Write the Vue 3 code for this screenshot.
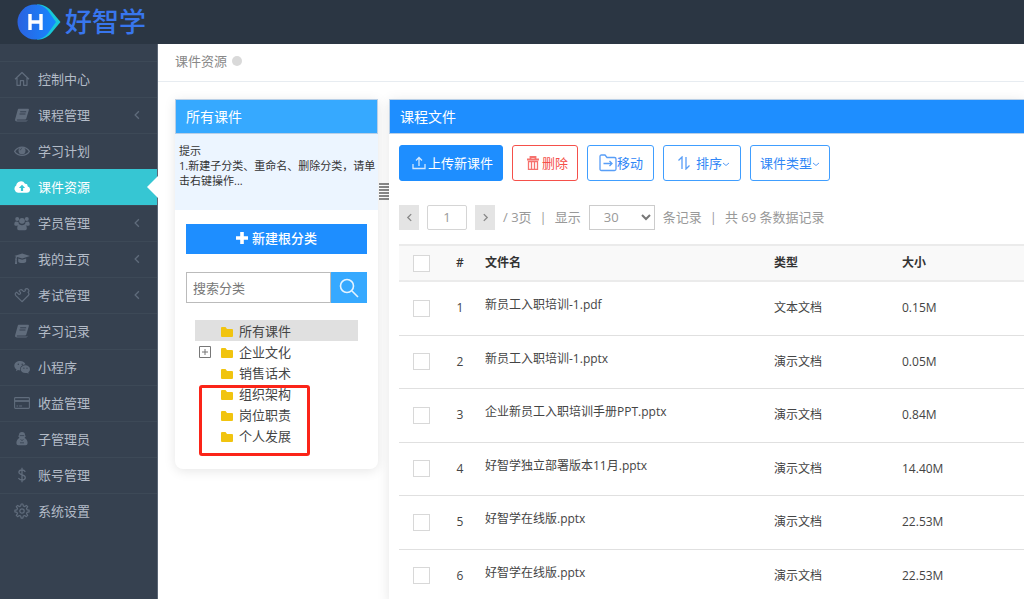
<script setup>
import { ref } from 'vue'

const icons = {
  home: '<path d="M1 8.2 8 1.5l7 6.7M3 7v7.3h3.4V9.6h3.2v4.7H13V7" fill="none" stroke="currentColor" stroke-width="1.2" stroke-linejoin="round"/>',
  book: '<path d="M5 1.800h9c.7 0 1.100.6.9 1.200l-2.600 8.500c-.2.800-.8 1.100-1.500 1.100H3.200c-.6 0-.8.8 0 .9h8.900c1 0 1.500-.4 1.800-1.200L15.600 6l-2 7.200c-.3.800-.9 1.200-1.700 1.200H3C1.300 14.400.7 13.200 1.200 11.900L3.700 3.100c.2-.9.600-1.300 1.300-1.300z" fill="currentColor"/><path d="M6.200 4.800h6M5.500 7h6" stroke="#364150" stroke-width="1"/>',
  eye: '<path d="M0.600 8.300C4.300 2.600 11.700 2.600 15.400 8.300 11.700 13.700 4.300 13.700.600 8.300z" fill="none" stroke="currentColor" stroke-width="1.300"/><circle cx="8" cy="7.700" r="3.500" fill="currentColor"/><path d="M6.100 7.300c.1-1 .8-1.600 1.800-1.700" fill="none" stroke="#364150" stroke-width=".8"/>',
  cloud: '<path fill-rule="evenodd" fill="currentColor" d="M4 13.700A3.900 3.900 0 0 1 2.200 6.600 4.700 4.700 0 0 1 11 4.800a2.600 2.600 0 0 1 2.700 2.800 3.100 3.100 0 0 1-.8 6.100zM8 5.800 4.900 9h2v3h2.200V9h2z"/>',
  users: '<g fill="currentColor"><circle cx="3.200" cy="4" r="2"/><circle cx="12.800" cy="4" r="2"/><circle cx="8" cy="5.800" r="2.900"/><path d="M.3 9.500C.3 7.500 1 6.500 2 6.500l2.500.4c0 1.200.4 2 1 2.600-1 .1-1.700.6-2.200 1.200H1.500c-.7 0-1.200-.4-1.200-1.200zM15.700 9.500c0-2-.7-3-1.700-3l-2.500.4c0 1.200-.4 2-1 2.600 1 .1 1.700.6 2.200 1.200h1.800c.7 0 1.200-.4 1.200-1.200zM3.200 13.300c0-2.400.9-3.900 2.500-3.900 1.400 1 3.200 1 4.600 0 1.600 0 2.500 1.500 2.500 3.900 0 1.300-.6 1.900-1.700 1.900H4.900c-1.100 0-1.700-.6-1.700-1.900z"/></g>',
  cap: '<path fill="currentColor" d="M8.200 2.500 16 5l-7.800 2.600-4.900-1.700c-.5.400-.7 1-.7 1.600.6.400.6 1 .1 1.400l.4 4H.9l.5-4c-.5-.4-.4-1 .1-1.400 0-.8.2-1.500.5-2L.2 5zM4.200 7.400l4 1.400 4-1.400v3.100c-.5 2-7.500 2-8 0z"/>',
  puzzle: '<g fill="none" stroke="currentColor" stroke-width="1.200" stroke-linejoin="round"><path d="M8 14.700 1.600 8.300C.9 7 1.300 5.800 2.600 5.200l2 2C5.900 7.700 7 6.500 6.400 5.400L5 4c.9-1.500 2.400-1.600 3.400-.7l1 1c1.500.4 2.400-.7 1.700-1.900 1-1.100 2.300-1.100 3.200-.1 1 1.100.7 2.400-.2 3 .9 1 1 2.400.2 3.200z"/></g>',
  wechat: '<g fill="currentColor"><path d="M6.200 2C2.900 2 .3 4.100.3 6.700c0 1.500.8 2.800 2.200 3.700l-.6 1.800 2.100-1.100c.8.200 1.500.3 2.300.3C5.500 7.900 8 5.500 11.500 5.500 11 3.500 8.800 2 6.200 2z"/><path d="M16 10.200c0-2.200-2.100-3.900-4.600-3.900s-4.700 1.700-4.700 3.900 2.100 3.900 4.700 3.900c.6 0 1.200-.1 1.700-.2l1.600.9-.4-1.500c1-.8 1.700-1.900 1.700-3.100z"/></g><g fill="#364150"><circle cx="4.300" cy="5.300" r=".7"/><circle cx="8.200" cy="5.300" r=".7"/><circle cx="9.900" cy="9.200" r=".6"/><circle cx="13" cy="9.200" r=".6"/></g>',
  card: '<rect x=".6" y="2.600" width="14.800" height="10.800" rx=".8" fill="none" stroke="currentColor" stroke-width="1.100"/><path d="M1 6h14" stroke="currentColor" stroke-width="1.800"/><path d="M2.500 11h1.600m1 0h3" stroke="currentColor"/>',
  admin: '<path fill="currentColor" d="M5 4.300C5 2 6 1 8 1s3 1 3 3.300l.8.700c-.1.600-.5 1-.9 1.200l-.3.900c1.800 1 3 2.700 3 4.600 0 1.700-.7 2.500-2.100 2.500h-7c-1.400 0-2.100-.8-2.100-2.500 0-1.900 1.200-3.600 3-4.600l-.3-.9c-.4-.2-.8-.6-.9-1.200z"/><path d="m6.500 8.500 1.500 1 1.500-1M6 11.800h4M5.800 4.600h4.400" fill="none" stroke="#364150" stroke-width=".8"/>',
  dollar: '<path d="M11.300 4.800C10.600 3.600 9.500 3 8 3 6.200 3 4.900 3.900 4.900 5.300c0 3.300 6.400 1.800 6.400 5.200 0 1.500-1.400 2.500-3.300 2.500-1.600 0-2.900-.7-3.600-2M8 .8v14.400" fill="none" stroke="currentColor" stroke-width="1.300"/>',
  gear: '<g fill="none" stroke="currentColor" stroke-width="1.200" stroke-linejoin="round"><path d="m6.700 3 .4-2h1.800l.4 2 1.400.6 1.700-1.200 1.300 1.300-1.200 1.700.6 1.400 2 .4v1.700l-2 .4-.6 1.400 1.200 1.700-1.300 1.300-1.700-1.200-1.400.6-.4 2H7.100l-.4-2-1.400-.6-1.700 1.200-1.300-1.300 1.200-1.700-.6-1.400-2-.4V7.200l2-.4.6-1.400-1.200-1.700 1.300-1.300 1.700 1.200z"/><circle cx="8" cy="8" r="2.200"/></g>'
}

const menu = [
  { label: '控制中心', icon: 'home' },
  { label: '课程管理', icon: 'book', more: true },
  { label: '学习计划', icon: 'eye' },
  { label: '课件资源', icon: 'cloud', active: true },
  { label: '学员管理', icon: 'users', more: true },
  { label: '我的主页', icon: 'cap', more: true },
  { label: '考试管理', icon: 'puzzle', more: true },
  { label: '学习记录', icon: 'book' },
  { label: '小程序', icon: 'wechat' },
  { label: '收益管理', icon: 'card' },
  { label: '子管理员', icon: 'admin' },
  { label: '账号管理', icon: 'dollar' },
  { label: '系统设置', icon: 'gear' }
]

const folders = [
  { name: '所有课件', current: true },
  { name: '企业文化', expandable: true },
  { name: '销售话术' }
]
const markedFolders = ['组织架构', '岗位职责', '个人发展']

const files = [
  { name: '新员工入职培训-1.pdf', type: '文本文档', size: '0.15M' },
  { name: '新员工入职培训-1.pptx', type: '演示文档', size: '0.05M' },
  { name: '企业新员工入职培训手册PPT.pptx', type: '演示文档', size: '0.84M' },
  { name: '好智学独立部署版本11月.pptx', type: '演示文档', size: '14.40M' },
  { name: '好智学在线版.pptx', type: '演示文档', size: '22.53M' },
  { name: '好智学在线版.pptx', type: '演示文档', size: '22.53M' }
]

const page = ref('1')
const pageSize = ref('30')
const keyword = ref('')
</script>

<template>
  <div class="app">
    <header class="topbar">
      <a class="brand" href="#">
        <svg class="logo" viewBox="0 0 44 36" aria-hidden="true">
          <defs>
            <linearGradient id="drop" x1="0" x2="1" y1="0" y2="0">
              <stop offset="0" stop-color="#2b62e0" />
              <stop offset="1" stop-color="#1688ff" />
            </linearGradient>
          </defs>
          <path d="M20 .5c6 0 10 2 13.500 5.500L43.500 18 33.500 30C30 33.500 26 35.500 20 35.500z" fill="#18c8d8" />
          <path d="M18 .5c5.500 0 9.500 2 12.500 5.500L39 18 30.500 30c-3 3.500-7 5.500-12.500 5.500a17.500 17.500 0 0 1 0-35z" fill="url(#drop)" />
          <path d="M13 10v16M24 10v16M13 18h11" stroke="#fff" stroke-width="3.400" fill="none" />
        </svg>
        <span class="brand-name">好智学</span>
      </a>
    </header>

    <div class="body">
      <nav class="sidebar">
        <a v-for="m in menu" :key="m.label" href="#" class="nav-item" :class="{ active: m.active }">
          <svg class="nav-icon" viewBox="0 0 16 16" aria-hidden="true" v-html="icons[m.icon]"></svg>
          <span>{{ m.label }}</span>
          <svg v-if="m.more" class="nav-more" viewBox="0 0 6 8" aria-hidden="true"><path d="M4.500 1 1.500 4l3 3" /></svg>
        </a>
      </nav>

      <main class="main">
        <div class="crumbs">
          <a href="#">课件资源</a>
          <i class="dot"></i>
        </div>

        <div class="content">
          <section class="tree-panel">
            <h2 class="panel-title light">所有课件</h2>
            <div class="hint">
              <p>提示</p>
              <p>1.新建子分类、重命名、删除分类，请单击右键操作...</p>
            </div>
            <div class="tree-body">
              <button type="button" class="add-root">
                <svg viewBox="0 0 12 12" aria-hidden="true"><path d="M6 0v12M0 6h12" stroke="currentColor" stroke-width="3.600" /></svg>
                新建根分类
              </button>
              <form class="search" @submit.prevent>
                <input v-model="keyword" type="text" placeholder="搜索分类" aria-label="搜索分类" />
                <button type="submit" aria-label="搜索">
                  <svg viewBox="0 0 20 20" aria-hidden="true"><circle cx="8" cy="8" r="6.500" /><path d="m13 13 6 6" /></svg>
                </button>
              </form>
              <div class="tree">
                <a v-for="f in folders" :key="f.name" href="#" class="node" :class="{ current: f.current }">
                  <span class="toggle">
                    <svg v-if="f.expandable" viewBox="0 0 12 12" aria-hidden="true"><path d="M.5.5h11v11H.5zM3 6h6M6 3v6" /></svg>
                  </span>
                  <svg class="folder" viewBox="0 0 12 10" aria-hidden="true"><path d="M1 0h3.500L6 2h5q1 0 1 1v6q0 1-1 1H1q-1 0-1-1V1q0-1 1-1z" /></svg>
                  {{ f.name }}
                </a>
                <div class="marked">
                  <a v-for="name in markedFolders" :key="name" href="#" class="node">
                    <span class="toggle"></span>
                    <svg class="folder" viewBox="0 0 12 10" aria-hidden="true"><path d="M1 0h3.500L6 2h5q1 0 1 1v6q0 1-1 1H1q-1 0-1-1V1q0-1 1-1z" /></svg>
                    {{ name }}
                  </a>
                </div>
              </div>
            </div>
          </section>

          <div class="splitter"><span class="grip"></span></div>

          <section class="file-panel">
            <h2 class="panel-title">课程文件</h2>
            <div class="file-body">
              <div class="toolbar">
                <button type="button" class="btn primary">
                  <svg class="i14" viewBox="0 0 14 14" aria-hidden="true"><path d="M1 8v4.500h12V8M7 10V2M4 4.500l3-3 3 3" /></svg>
                  上传新课件
                </button>
                <button type="button" class="btn danger">
                  <svg class="i14" viewBox="0 0 14 14" aria-hidden="true"><path d="M1 3.500h12M4.500 3V1h5v2" stroke-width="1.800" /><path d="M2.500 5.500h9v7.800h-9zM5.500 6v7M8.500 6v7" /></svg>
                  删除
                </button>
                <button type="button" class="btn tight">
                  <svg class="i18" viewBox="0 0 18 18" aria-hidden="true"><path d="M1 2.500q0-1.500 1.500-1.500H6l2 2.500h7.500Q17 3.500 17 5v10q0 1.500-1.500 1.500h-13Q1 16.500 1 15zM4.500 9.500H13M10.500 7l2.500 2.500L10.500 12" /></svg>
                  移动
                </button>
                <button type="button" class="btn sort">
                  <svg class="i14" viewBox="0 0 14 14" aria-hidden="true"><path d="M1.500 4.500 5 1v12M9 1v12l3.500-3.500" /></svg>
                  <span>排序<svg class="caret" viewBox="0 0 8 5" aria-hidden="true"><path d="m1 1 3 2.500L7 1" /></svg></span>
                </button>
                <button type="button" class="btn">
                  <span>课件类型<svg class="caret" viewBox="0 0 8 5" aria-hidden="true"><path d="m1 1 3 2.500L7 1" /></svg></span>
                </button>
              </div>

              <div class="pager">
                <button type="button" class="step" aria-label="上一页"><svg viewBox="0 0 6 8" aria-hidden="true"><path d="M4.500 1 1.500 4l3 3" /></svg></button>
                <input v-model="page" type="text" aria-label="页码" />
                <button type="button" class="step" aria-label="下一页"><svg viewBox="0 0 6 8" aria-hidden="true"><path d="m1.500 1 3 3-3 3" /></svg></button>
                <span>/ 3页</span>
                <span>|</span>
                <label for="page-size">显示</label>
                <span class="select">
                  <select id="page-size" v-model="pageSize">
                    <option>30</option>
                    <option>50</option>
                  </select>
                  <svg viewBox="0 0 10 7" aria-hidden="true"><path d="m1 1 4 4 4-4" /></svg>
                </span>
                <span>条记录</span>
                <span>|</span>
                <span>共 69 条数据记录</span>
              </div>

              <table>
                <colgroup>
                  <col class="c-check" />
                  <col class="c-num" />
                  <col />
                  <col class="c-type" />
                  <col class="c-size" />
                </colgroup>
                <thead>
                  <tr>
                    <th class="check"><input type="checkbox" aria-label="全选" /></th>
                    <th class="num">#</th>
                    <th>文件名</th>
                    <th>类型</th>
                    <th>大小</th>
                  </tr>
                </thead>
                <tbody>
                  <tr v-for="(f, i) in files" :key="i">
                    <td class="check"><input type="checkbox" :aria-label="'选择 ' + f.name" /></td>
                    <td class="num">{{ i + 1 }}</td>
                    <td class="name">{{ f.name }}</td>
                    <td>{{ f.type }}</td>
                    <td>{{ f.size }}</td>
                  </tr>
                </tbody>
              </table>
            </div>
          </section>
        </div>
      </main>
    </div>
  </div>
</template>

<style>
body {
  margin: 0;
  overflow: hidden;
}
</style>

<style scoped>
.app {
  display: flex;
  flex-direction: column;
  height: 100vh;
  overflow: hidden;
  font: 13px/20px "Open Sans", "Noto Sans CJK SC", sans-serif;
  color: #444;
  background: #fff;
}
.app *,
.app *::after {
  box-sizing: border-box;
}
button,
input,
select {
  font: inherit;
  margin: 0;
}
button {
  cursor: pointer;
}
a {
  color: inherit;
  text-decoration: none;
}
svg {
  flex: none;
}
.topbar {
  flex: none;
  height: 44px;
  background: #2b3643;
}
.brand {
  display: inline-flex;
  align-items: center;
  gap: 4px;
  height: 44px;
  padding-left: 17px;
}
.logo {
  width: 44px;
  height: 36px;
}
.brand-name {
  font-size: 27px;
  font-weight: 500;
  line-height: 44px;
  color: #3876ee;
}
.body {
  flex: 1;
  display: flex;
  min-height: 0;
}
.sidebar {
  flex: none;
  width: 158px;
  padding-top: 17px;
  background: #364150;
  border-right: 1px solid #5b6675;
}
.nav-item {
  position: relative;
  display: flex;
  align-items: center;
  gap: 8px;
  height: 36px;
  padding: 0 16px 2px 14px;
  border-top: 1px solid #3d4957;
  color: #b4bcc8;
}
.nav-icon {
  width: 16px;
  height: 16px;
  color: #606c7c;
}
.nav-more {
  width: 8px;
  height: 10px;
  margin-left: auto;
  fill: none;
  stroke: #606c7c;
}
.nav-item.active {
  background: #36c6d3;
  border-color: #36c6d3;
  color: #fff;
}
.nav-item.active .nav-icon {
  color: #fff;
}
.nav-item.active::after {
  content: "";
  position: absolute;
  top: 6px;
  right: -1px;
  border: 11px solid transparent;
  border-right-color: #fff;
  border-left-width: 0;
}
.main {
  flex: 1;
  min-width: 0;
}
.crumbs {
  display: flex;
  align-items: center;
  gap: 5px;
  height: 38px;
  padding: 0 0 4px 17px;
  border-bottom: 1px solid #e7ecf1;
  color: #888;
}
.dot {
  width: 10px;
  height: 10px;
  border-radius: 50%;
  background: #d9d9d9;
}
.content {
  display: flex;
  align-items: flex-start;
  padding: 17px 0 0 17px;
}
.tree-panel {
  flex: none;
  width: 203px;
  border-radius: 0 0 8px 8px;
  background: #fff;
  box-shadow: 0 2px 12px rgba(0, 0, 0, 0.1);
}
.panel-title {
  margin: 0;
  height: 35px;
  padding-left: 10px;
  border: 1px solid #b9cfe6;
  font-size: 14px;
  font-weight: 400;
  line-height: 33px;
  color: #fff;
  background: #1e8eff;
}
.panel-title.light {
  background: #36a9ff;
}
.hint {
  height: 76px;
  padding: 9px 0 0 4px;
  background: #ecf5ff;
  font-size: 11px;
  line-height: 15px;
  color: #333;
}
.hint p {
  margin: 0;
}
.tree-body {
  padding: 14px 11px 0;
}
.add-root {
  display: flex;
  align-items: center;
  justify-content: center;
  gap: 4px;
  width: 100%;
  height: 30px;
  padding: 0 0 2px;
  border: 0;
  color: #fff;
  font-weight: 500;
  background: #1e8eff;
}
.add-root svg {
  width: 12px;
  height: 12px;
}
.search {
  display: flex;
  height: 31px;
  margin-top: 18px;
}
.search input {
  flex: 1;
  min-width: 0;
  padding: 0 6px;
  border: 1px solid #bbb;
  color: #555;
}
.search input::placeholder {
  color: #777;
}
.search button {
  flex: none;
  width: 36px;
  padding: 0;
  border: 0;
  background: #36a9ff;
}
.search svg {
  display: block;
  width: 20px;
  height: 20px;
  margin: auto;
  fill: none;
  stroke: #e6f4ff;
  stroke-width: 1.6;
}
.tree {
  margin: 17px 9px 0;
}
.node {
  display: flex;
  align-items: center;
  height: 21px;
  color: #444;
}
.node.current {
  background: #e0e0e0;
}
.toggle {
  flex: none;
  display: flex;
  width: 26px;
  padding-left: 4px;
}
.toggle svg {
  width: 12px;
  height: 12px;
  fill: none;
  stroke: #777;
}
.folder {
  width: 12px;
  height: 10px;
  margin: 2px 6px 0 0;
  fill: #f1c40f;
}
.marked {
  position: relative;
  padding-bottom: 23px;
}
.marked::after {
  content: "";
  position: absolute;
  top: 2px;
  left: 4px;
  width: 111px;
  height: 71px;
  border: 3px solid #fb2418;
  border-radius: 3px;
  pointer-events: none;
}
.splitter {
  flex: none;
  width: 11px;
  padding: 84px 0 0 1px;
}
.grip {
  display: block;
  height: 17px;
  background: repeating-linear-gradient(#888 0 2px, #fff 2px 3px);
}
.file-panel {
  flex: 1;
  min-width: 0;
  background: #fff;
  box-shadow: 0 2px 12px rgba(0, 0, 0, 0.1);
}
.file-panel .panel-title {
  border-right: 0;
}
.file-body {
  padding: 11px 0 0 10px;
}
.toolbar {
  display: flex;
  gap: 9px;
}
.btn {
  display: flex;
  align-items: center;
  justify-content: center;
  gap: 2px;
  height: 36px;
  padding: 0 9px 1px;
  border: 1px solid #409eff;
  border-radius: 3px;
  background: #fff;
  color: #2f86f6;
  white-space: nowrap;
}
.btn.primary {
  padding-left: 12px;
  border-color: #1e8eff;
  background: #1e8eff;
  color: #fff;
}
.btn.danger {
  padding-left: 13px;
  border-color: #f5504a;
  color: #f5504a;
}
.btn.tight {
  gap: 0;
  padding: 0 10px 1px 11px;
}
.btn.sort {
  gap: 5px;
  padding: 0 10px 1px 13px;
}
.btn svg {
  fill: none;
  stroke: currentColor;
  stroke-width: 1.3;
  opacity: 0.8;
}
.i14 {
  width: 14px;
  height: 14px;
}
.i18 {
  width: 18px;
  height: 18px;
}
.btn .caret {
  width: 8px;
  height: 5px;
  stroke-width: 1;
  vertical-align: middle;
}
.pager {
  display: flex;
  align-items: center;
  gap: 8px;
  height: 26px;
  margin-top: 23px;
  color: #999;
  white-space: nowrap;
}
.step {
  display: flex;
  align-items: center;
  justify-content: center;
  width: 20px;
  height: 25px;
  padding: 0;
  border: 0;
  background: #e4e4e4;
}
.step svg {
  width: 7px;
  height: 9px;
  fill: none;
  stroke: #888;
  stroke-width: 1.2;
}
.pager input {
  width: 40px;
  height: 25px;
  padding: 0;
  border: 1px solid #d5d5d5;
  border-radius: 2px;
  text-align: center;
  color: #999;
}
.select {
  position: relative;
  display: flex;
}
.select select {
  width: 66px;
  height: 25px;
  padding: 0 14px;
  border: 1px solid #ccc;
  border-radius: 0;
  appearance: none;
  background: #fff;
  color: #999;
}
.select svg {
  position: absolute;
  top: 9px;
  right: 4px;
  width: 10px;
  height: 7px;
  fill: none;
  stroke: #777;
  stroke-width: 2;
  pointer-events: none;
}
table {
  width: 100%;
  margin-top: 14px;
  border-collapse: collapse;
  table-layout: fixed;
  font-size: 12px;
}
.c-check {
  width: 44px;
}
.c-num {
  width: 34px;
}
.c-type {
  width: 128px;
}
.c-size {
  width: 130px;
}
th,
td {
  padding: 0 8px;
  text-align: left;
  vertical-align: middle;
}
th {
  height: 36px;
  border-top: 2px solid #ebebeb;
  border-bottom: 2px solid #ebebeb;
  background: #f9f9f9;
  font-weight: 600;
  color: #333;
}
td {
  height: 53px;
  border-bottom: 1px solid #e0e0e0;
}
tr:nth-child(odd) td {
  height: 54px;
}
.check,
.num {
  padding: 0;
  text-align: center;
}
.name {
  padding-bottom: 6px;
}
.check input {
  display: block;
  width: 17px;
  height: 17px;
  margin: 0 auto;
  border: 1px solid #d8d8d8;
  appearance: none;
  background: #fff;
}
</style>
